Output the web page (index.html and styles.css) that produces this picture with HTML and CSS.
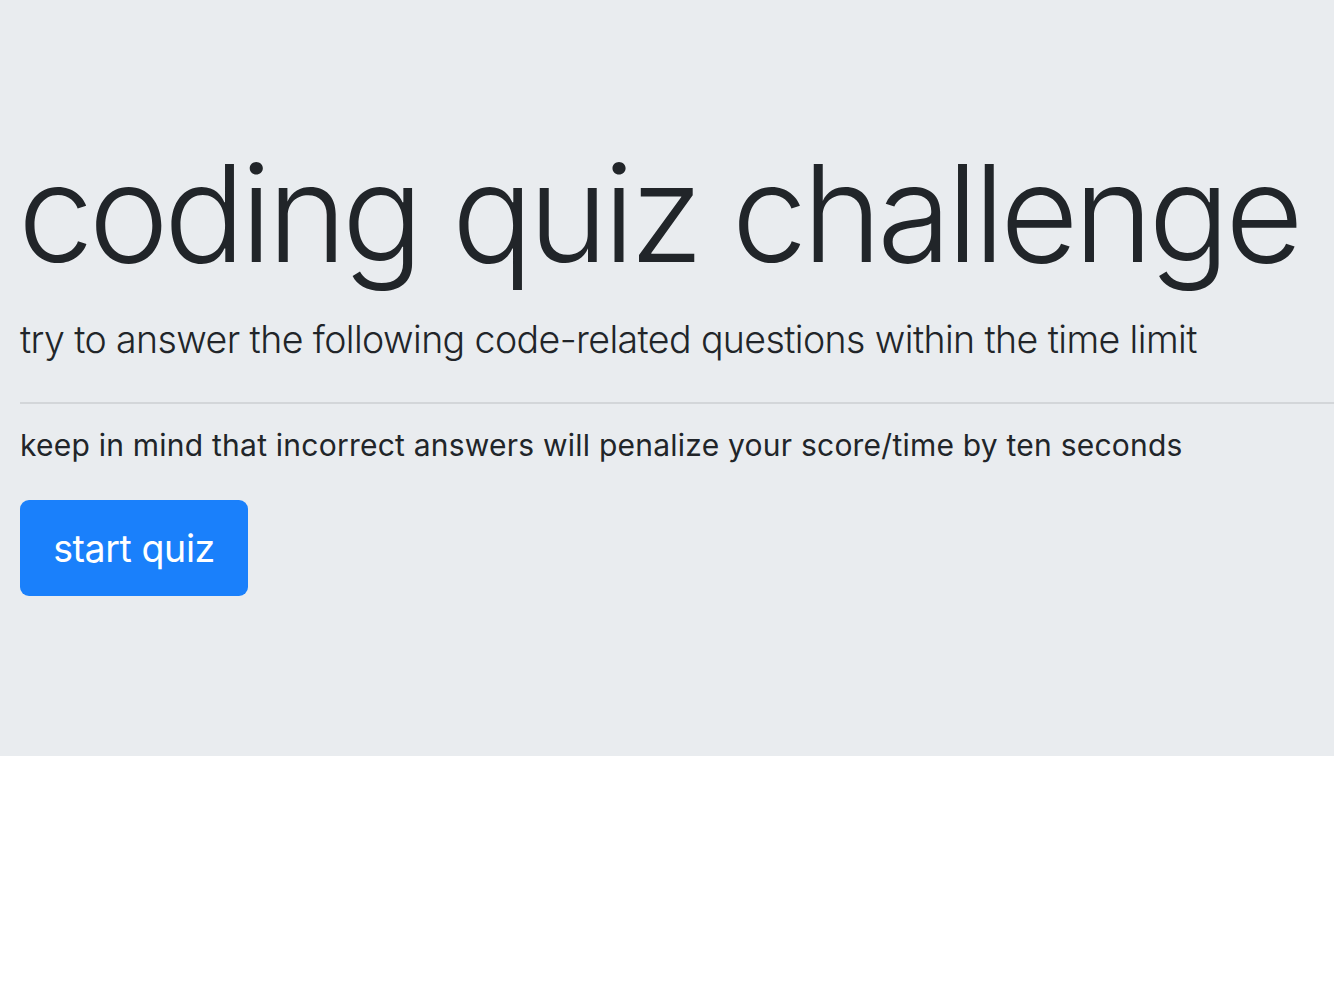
FILE: index.html
```html
<!DOCTYPE html>
<html lang="en">
<head>
<meta charset="utf-8">
<title>coding quiz challenge</title>
<link rel="stylesheet" href="styles.css">
</head>
<body>
  <header class="jumbotron">
    <h1 class="title">coding quiz challenge</h1>
    <p class="lead">try to answer the following code-related questions within the time limit</p>
    <hr class="divider">
    <p class="note">keep in mind that incorrect answers will penalize your score/time by ten seconds</p>
    <button class="btn-start" type="button">start quiz</button>
  </header>
</body>
</html>
```

FILE: styles.css
```css
html, body {
  margin: 0;
  padding: 0;
  background: #ffffff;
}

body {
  font-family: Inter, "Noto Sans", "Liberation Sans", sans-serif;
  color: #212529;
}

.jumbotron {
  background: #e9ecef;
  padding: 132px 0 160px 20px;
  display: flex;
  flex-direction: column;
  align-items: flex-start;
}

.title {
  margin: 0 0 0 -2px;
  font-size: 135px;
  line-height: 162px;
  font-weight: 300;
  letter-spacing: -0.035em;
  white-space: nowrap;
}

.lead {
  margin: 18px 0 0;
  font-size: 37.5px;
  line-height: 56px;
  font-weight: 300;
  letter-spacing: -0.6px;
}

.divider {
  align-self: stretch;
  margin: 34px 0 0;
  border: 0;
  border-top: 2px solid #d3d6d9;
  height: 0;
}

.note {
  margin: 19px 0 0;
  font-size: 30px;
  line-height: 45px;
  font-weight: 400;
  letter-spacing: 0.23px;
}

.btn-start {
  margin-top: 32px;
  width: 228px;
  height: 96px;
  border: 0;
  border-radius: 9px;
  background: #1a80fb;
  color: #ffffff;
  font-family: inherit;
  font-size: 37.5px;
  font-weight: 400;
  letter-spacing: -0.4px;
  padding: 0;
  cursor: pointer;
}
```
